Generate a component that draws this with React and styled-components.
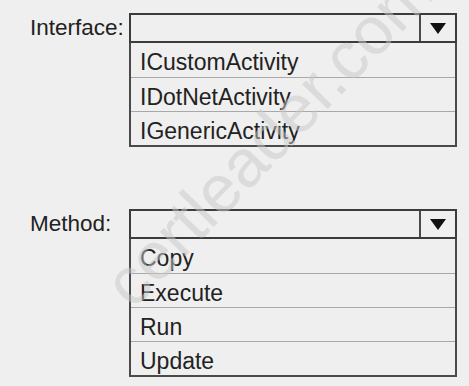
import React from 'react';
import styled, { createGlobalStyle } from 'styled-components';

const GlobalStyle = createGlobalStyle`
  html, body {
    margin: 0;
    padding: 0;
    background: #efefef;
  }
`;

const fields = [
  { label: 'Interface:', options: ['ICustomActivity', 'IDotNetActivity', 'IGenericActivity'] },
  { label: 'Method:', options: ['Copy', 'Execute', 'Run', 'Update'] },
];

export default function App() {
  return (
    <>
      <GlobalStyle />
      <Page>
        {fields.map((field, index) => (
          <Field key={index}>
            <Label>{field.label}</Label>
            <Combo>
              <Header>
                <Input />
                <ArrowCell>
                  <Triangle />
                </ArrowCell>
              </Header>
              <List>
                {field.options.map((option, i) => (
                  <Option key={i}>{option}</Option>
                ))}
              </List>
            </Combo>
          </Field>
        ))}
        <Watermark>certleader.com</Watermark>
      </Page>
    </>
  );
}

const Page = styled.div`
  position: relative;
  overflow: hidden;
  width: 469px;
  height: 386px;
  box-sizing: border-box;
  padding: 13px 0 0 30px;
  display: flex;
  flex-direction: column;
  gap: 62px;
  background: #efefef;
  font-family: 'Liberation Sans', Arial, sans-serif;
  color: #222;
`;

const Field = styled.div`
  display: grid;
  grid-template-columns: 99px 328px;
  align-items: start;
`;

const Label = styled.div`
  font-size: 22.5px;
  line-height: 30px;
`;

const Combo = styled.div`
  display: flex;
  flex-direction: column;
`;

const Header = styled.div`
  height: 30px;
  box-sizing: border-box;
  border: 2px solid #3c3c3c;
  display: flex;
`;

const Input = styled.div`
  flex: 1;
`;

const ArrowCell = styled.div`
  width: 34px;
  border-left: 2px solid #4a4a4a;
  display: flex;
  align-items: center;
  justify-content: center;
`;

const Triangle = styled.div`
  width: 0;
  height: 0;
  border-left: 8px solid transparent;
  border-right: 8px solid transparent;
  border-top: 11px solid #111;
`;

const List = styled.div`
  border: 2px solid #4a4a4a;
  border-top: none;
  display: flex;
  flex-direction: column;
`;

const Option = styled.div`
  height: 34px;
  box-sizing: border-box;
  padding: 6px 0 0 9px;
  font-size: 23px;
  line-height: 26px;
  & + & {
    border-top: 1px solid #a8a8a8;
  }
`;

const Watermark = styled.span`
  position: absolute;
  left: 92px;
  top: 271px;
  transform-origin: 0 0;
  transform: rotate(-46deg);
  font-family: 'Liberation Sans', Arial, sans-serif;
  font-size: 67px;
  line-height: 1;
  white-space: nowrap;
  color: rgba(200, 200, 200, 0.5);
  pointer-events: none;
`;
